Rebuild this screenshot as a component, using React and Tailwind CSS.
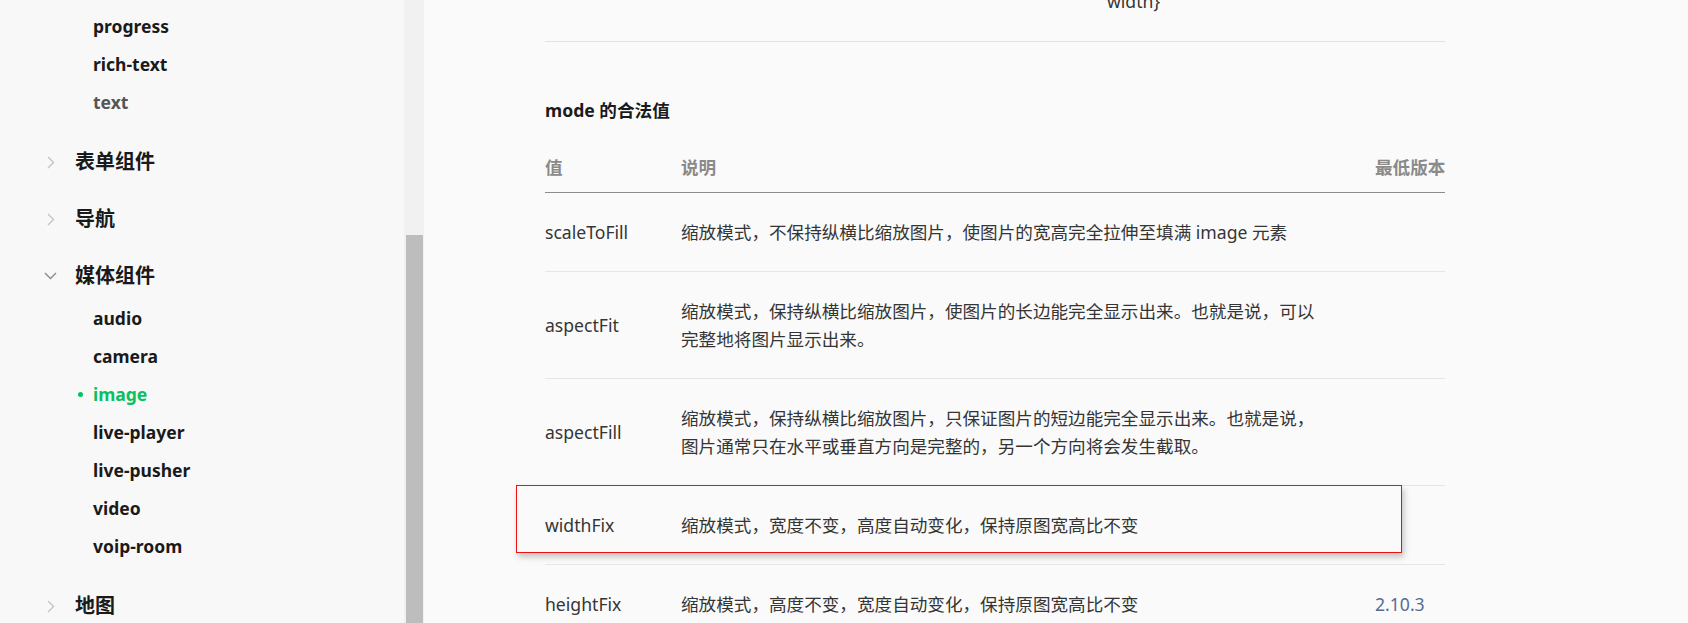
import React from 'react'

const modes = [
  { v: 'scaleToFill', d: '缩放模式，不保持纵横比缩放图片，使图片的宽高完全拉伸至填满 image 元素' },
  { v: 'aspectFit', d: '缩放模式，保持纵横比缩放图片，使图片的长边能完全显示出来。也就是说，可以完整地将图片显示出来。' },
  { v: 'aspectFill', d: '缩放模式，保持纵横比缩放图片，只保证图片的短边能完全显示出来。也就是说，图片通常只在水平或垂直方向是完整的，另一个方向将会发生截取。' },
  { v: 'widthFix', d: '缩放模式，宽度不变，高度自动变化，保持原图宽高比不变', mark: true },
  { v: 'heightFix', d: '缩放模式，高度不变，宽度自动变化，保持原图宽高比不变', ver: '2.10.3' },
]

function Chevron({ open }) {
  if (open) {
    return (
      <svg width="13" height="8" viewBox="0 0 13 8" fill="none">
        <polyline points="1,1 6.5,6.5 12,1" stroke="#8a8a8a" strokeWidth="1.4" />
      </svg>
    )
  }
  return (
    <svg width="8" height="13" viewBox="0 0 8 13" fill="none">
      <polyline points="1,1 6.5,6.5 1,12" stroke="#c4c4c4" strokeWidth="1.4" />
    </svg>
  )
}

function Group({ title, open, items, active }) {
  return (
    <div className="mb-[11px]">
      <div className="flex h-[46px] items-center pl-[44px]">
        <div className="flex w-[13px] justify-center">
          <Chevron open={open} />
        </div>
        <span className="ml-[18px] text-[20px] font-bold text-[#1a1a1a]">{title}</span>
      </div>
      {open && <SubList items={items} active={active} />}
    </div>
  )
}

function SubList({ items, active, muted }) {
  return (
    <ul className="pb-[7px]">
      {items.map((it) => (
        <li key={it} className="flex h-[38px] items-center text-[17.5px] font-bold">
          {it === active ? (
            <span className="flex items-center pl-[78px] text-[#07c160]">
              <span className="mr-[10px] h-[5px] w-[5px] rounded-full bg-[#07c160]" />
              {it}
            </span>
          ) : (
            <span className={`pl-[93px] ${it === muted ? 'text-[#555555]' : 'text-[#1a1a1a]'}`}>{it}</span>
          )}
        </li>
      ))}
    </ul>
  )
}

function Sidebar() {
  return (
    <div className="flex shrink-0">
      <aside className="w-[404px] bg-[#f8f8f8] pt-[7px]">
        <div className="mb-[11px]">
          <SubList items={['progress', 'rich-text', 'text']} muted="text" />
        </div>
        <Group title="表单组件" />
        <Group title="导航" />
        <Group
          title="媒体组件"
          open
          active="image"
          items={['audio', 'camera', 'image', 'live-player', 'live-pusher', 'video', 'voip-room']}
        />
        <Group title="地图" />
      </aside>
      <div className="flex w-[20px] flex-col bg-[#f1f1f1] pl-[2px] pr-[1px]">
        <div className="h-[235px]" />
        <div className="flex-1 bg-[#bdbdbd]" />
      </div>
    </div>
  )
}

function Row({ m }) {
  return (
    <div className="relative grid grid-cols-[136px_694px_70px] items-center border-b border-[#e6e6e6] py-[25px] leading-[28px] text-[17.6px] text-[#353535]">
      <div>{m.v}</div>
      <div className="pr-[50px]">{m.d}</div>
      <div className="whitespace-nowrap text-[#576b95]">{m.ver}</div>
      {m.mark && (
        <div className="absolute -top-px left-[-29px] h-[68px] w-[886px] border border-[#ee1111] shadow-[2px_4px_6px_rgba(0,0,0,0.22)]" />
      )}
    </div>
  )
}

export default function App() {
  return (
    <div className="flex h-[623px] w-[1688px] overflow-hidden bg-[#fafafa] font-['Noto_Sans','Noto_Sans_CJK_SC',sans-serif]">
      <Sidebar />
      <main className="flex-1 pl-[121px]">
        <div className="flex w-[900px] flex-col">
          <div className="flex h-[42px] flex-col border-b border-[#e3e3e3]">
            <div className="-mt-[13px] ml-[562px] leading-[28px] text-[17.6px] text-[#353535]">width&#125;</div>
          </div>
          <h3 className="mt-[54px] text-[17.6px] font-bold leading-[28px] text-[#1a1a1a]">mode 的合法值</h3>
          <div className="mt-[29px] grid grid-cols-[136px_694px_70px] border-b border-[#8c8c8c] pb-[11px] text-[17.6px] font-bold leading-[28px] text-[#8a8a8a]">
            <div>值</div>
            <div>说明</div>
            <div className="whitespace-nowrap">最低版本</div>
          </div>
          {modes.map((m) => (
            <Row key={m.v} m={m} />
          ))}
        </div>
      </main>
    </div>
  )
}
